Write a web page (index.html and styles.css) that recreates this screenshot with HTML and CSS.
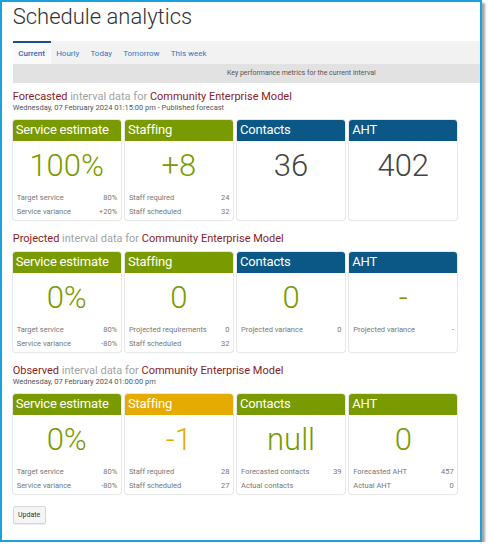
FILE: index.html
```html
<!DOCTYPE html>
<html lang="en">
<head>
  <meta charset="UTF-8">
  <title>Schedule analytics</title>
  <link rel="stylesheet" href="styles.css">
</head>
<body>
<div class="frame">
  <h1 class="page-title">Schedule analytics</h1>

  <div class="tabs">
    <a class="tab tab-active">Current</a>
    <a class="tab">Hourly</a>
    <a class="tab">Today</a>
    <a class="tab">Tomorrow</a>
    <a class="tab">This week</a>
  </div>
  <div class="tab-caption">Key performance metrics for the current interval</div>

  <!-- forecasted -->
  <div class="block block-first">
    <div class="block-title"><span class="hl">Forecasted</span> interval data for <span class="hl">Community Enterprise Model</span></div>
    <div class="block-sub">Wednesday, 07 February 2024 01:15:00 pm - Published forecast</div>
    <div class="cards">
      <div class="card">
        <div class="card-head head-green">Service estimate</div>
        <div class="card-value val-green">100%</div>
        <div class="card-rows">
          <div class="row"><span>Target service</span><span>80%</span></div>
          <div class="row"><span>Service variance</span><span>+20%</span></div>
        </div>
      </div>
      <div class="card">
        <div class="card-head head-green">Staffing</div>
        <div class="card-value val-green">+8</div>
        <div class="card-rows">
          <div class="row"><span>Staff required</span><span>24</span></div>
          <div class="row"><span>Staff scheduled</span><span>32</span></div>
        </div>
      </div>
      <div class="card">
        <div class="card-head head-blue">Contacts</div>
        <div class="card-value val-dark">36</div>
        <div class="card-rows"></div>
      </div>
      <div class="card">
        <div class="card-head head-blue">AHT</div>
        <div class="card-value val-dark">402</div>
        <div class="card-rows"></div>
      </div>
    </div>
  </div>

  <!-- projected -->
  <div class="block">
    <div class="block-title"><span class="hl">Projected</span> interval data for <span class="hl">Community Enterprise Model</span></div>
    <div class="cards">
      <div class="card">
        <div class="card-head head-green">Service estimate</div>
        <div class="card-value val-green">0%</div>
        <div class="card-rows">
          <div class="row"><span>Target service</span><span>80%</span></div>
          <div class="row"><span>Service variance</span><span>-80%</span></div>
        </div>
      </div>
      <div class="card">
        <div class="card-head head-green">Staffing</div>
        <div class="card-value val-green">0</div>
        <div class="card-rows">
          <div class="row"><span>Projected requirements</span><span>0</span></div>
          <div class="row"><span>Staff scheduled</span><span>32</span></div>
        </div>
      </div>
      <div class="card">
        <div class="card-head head-blue">Contacts</div>
        <div class="card-value val-green">0</div>
        <div class="card-rows">
          <div class="row"><span>Projected variance</span><span>0</span></div>
        </div>
      </div>
      <div class="card">
        <div class="card-head head-blue">AHT</div>
        <div class="card-value val-green">-</div>
        <div class="card-rows">
          <div class="row"><span>Projected variance</span><span>-</span></div>
        </div>
      </div>
    </div>
  </div>

  <!-- observed -->
  <div class="block">
    <div class="block-title"><span class="hl">Observed</span> interval data for <span class="hl">Community Enterprise Model</span></div>
    <div class="block-sub">Wednesday, 07 February 2024 01:00:00 pm</div>
    <div class="cards">
      <div class="card">
        <div class="card-head head-green">Service estimate</div>
        <div class="card-value val-green">0%</div>
        <div class="card-rows">
          <div class="row"><span>Target service</span><span>80%</span></div>
          <div class="row"><span>Service variance</span><span>-80%</span></div>
        </div>
      </div>
      <div class="card">
        <div class="card-head head-amber">Staffing</div>
        <div class="card-value val-amber">-1</div>
        <div class="card-rows">
          <div class="row"><span>Staff required</span><span>28</span></div>
          <div class="row"><span>Staff scheduled</span><span>27</span></div>
        </div>
      </div>
      <div class="card">
        <div class="card-head head-green">Contacts</div>
        <div class="card-value val-green">null</div>
        <div class="card-rows">
          <div class="row"><span>Forecasted contacts</span><span>39</span></div>
          <div class="row"><span>Actual contacts</span><span></span></div>
        </div>
      </div>
      <div class="card">
        <div class="card-head head-green">AHT</div>
        <div class="card-value val-green">0</div>
        <div class="card-rows">
          <div class="row"><span>Forecasted AHT</span><span>457</span></div>
          <div class="row"><span>Actual AHT</span><span>0</span></div>
        </div>
      </div>
    </div>
  </div>

  <button class="update-button">Update</button>
</div>
</body>
</html>
```

FILE: styles.css
```css
body {
  margin: 0;
  background: #fff;
  color: #333;
  font-family: Roboto, "Liberation Sans", sans-serif;
}

.frame {
  box-sizing: border-box;
  width: 482px;
  height: 542px;
  border: 2px solid #1ba1dd;
  padding: 0 0 0 10.7px;
  box-shadow: 3px 3px 2px rgba(0, 0, 0, 0.35);
  background: #fff;
}

.page-title {
  margin: 0;
  font-size: 22px;
  font-weight: 300;
  line-height: 29px;
  color: #333;
}

/* tab strip */
.tabs {
  display: flex;
  margin-top: 9.7px;
  background: #f2f2f2;
}

.tab {
  padding: 6px 5.6px 5.5px;
  border-top: 2px solid transparent;
  font-size: 8px;
  line-height: 10px;
  color: #2f78c2;
}

.tab-active {
  border-top-color: #1c5485;
  background: #fafafa;
  font-weight: 500;
  color: #2a6cb3;
}

.tab-caption {
  height: 19px;
  padding-left: 110px;
  background: #e2e2e2;
  font-size: 7px;
  line-height: 19px;
  text-align: center;
  color: #555;
}

/* sections */
.block {
  margin-top: 12px;
}

.block-first {
  margin-top: 6.6px;
}

.block-title {
  font-size: 11px;
  line-height: 13px;
  color: #a3a3a3;
}

.block-title .hl {
  color: #8a2222;
}

.block-sub {
  font-size: 7.5px;
  line-height: 10px;
  color: #555;
}

.cards {
  display: flex;
  gap: 4.2px;
  margin-top: 7px;
}

.card {
  display: flex;
  flex-direction: column;
  width: 108px;
  height: 100px;
  border-radius: 3px;
  background: #fff;
  box-shadow: 0 0 0 1px #e7e7e7, 0 1px 2px rgba(0, 0, 0, 0.06);
}

.card-head {
  height: 21.5px;
  padding-left: 3px;
  border-radius: 3px 3px 0 0;
  font-size: 13px;
  letter-spacing: -0.2px;
  line-height: 19px;
  color: #fff;
}

.head-green { background: #7a9a01; }
.head-blue  { background: #0b5886; }
.head-amber { background: #e6ab02; }

.card-value {
  box-sizing: border-box;
  height: 50px;
  padding-top: 7px;
  font-size: 31px;
  font-weight: 300;
  line-height: 36px;
  text-align: center;
}

.val-green { color: #7a9a01; }
.val-dark  { color: #444; }
.val-amber { color: #e6ab02; }

.card-rows {
  padding: 0 3.5px 0 4px;
}

.row {
  display: flex;
  justify-content: space-between;
  font-size: 7.5px;
  line-height: 13.3px;
  color: #777;
}

.update-button {
  display: block;
  margin-top: 12px;
  width: 33px;
  height: 18px;
  padding: 0;
  border: 1px solid #d6d6d6;
  border-radius: 2px;
  background: #f5f5f5;
  box-shadow: 0 1px 1px rgba(0, 0, 0, 0.08);
  font-family: Roboto, "Liberation Sans", sans-serif;
  font-size: 7px;
  color: #333;
}
```
